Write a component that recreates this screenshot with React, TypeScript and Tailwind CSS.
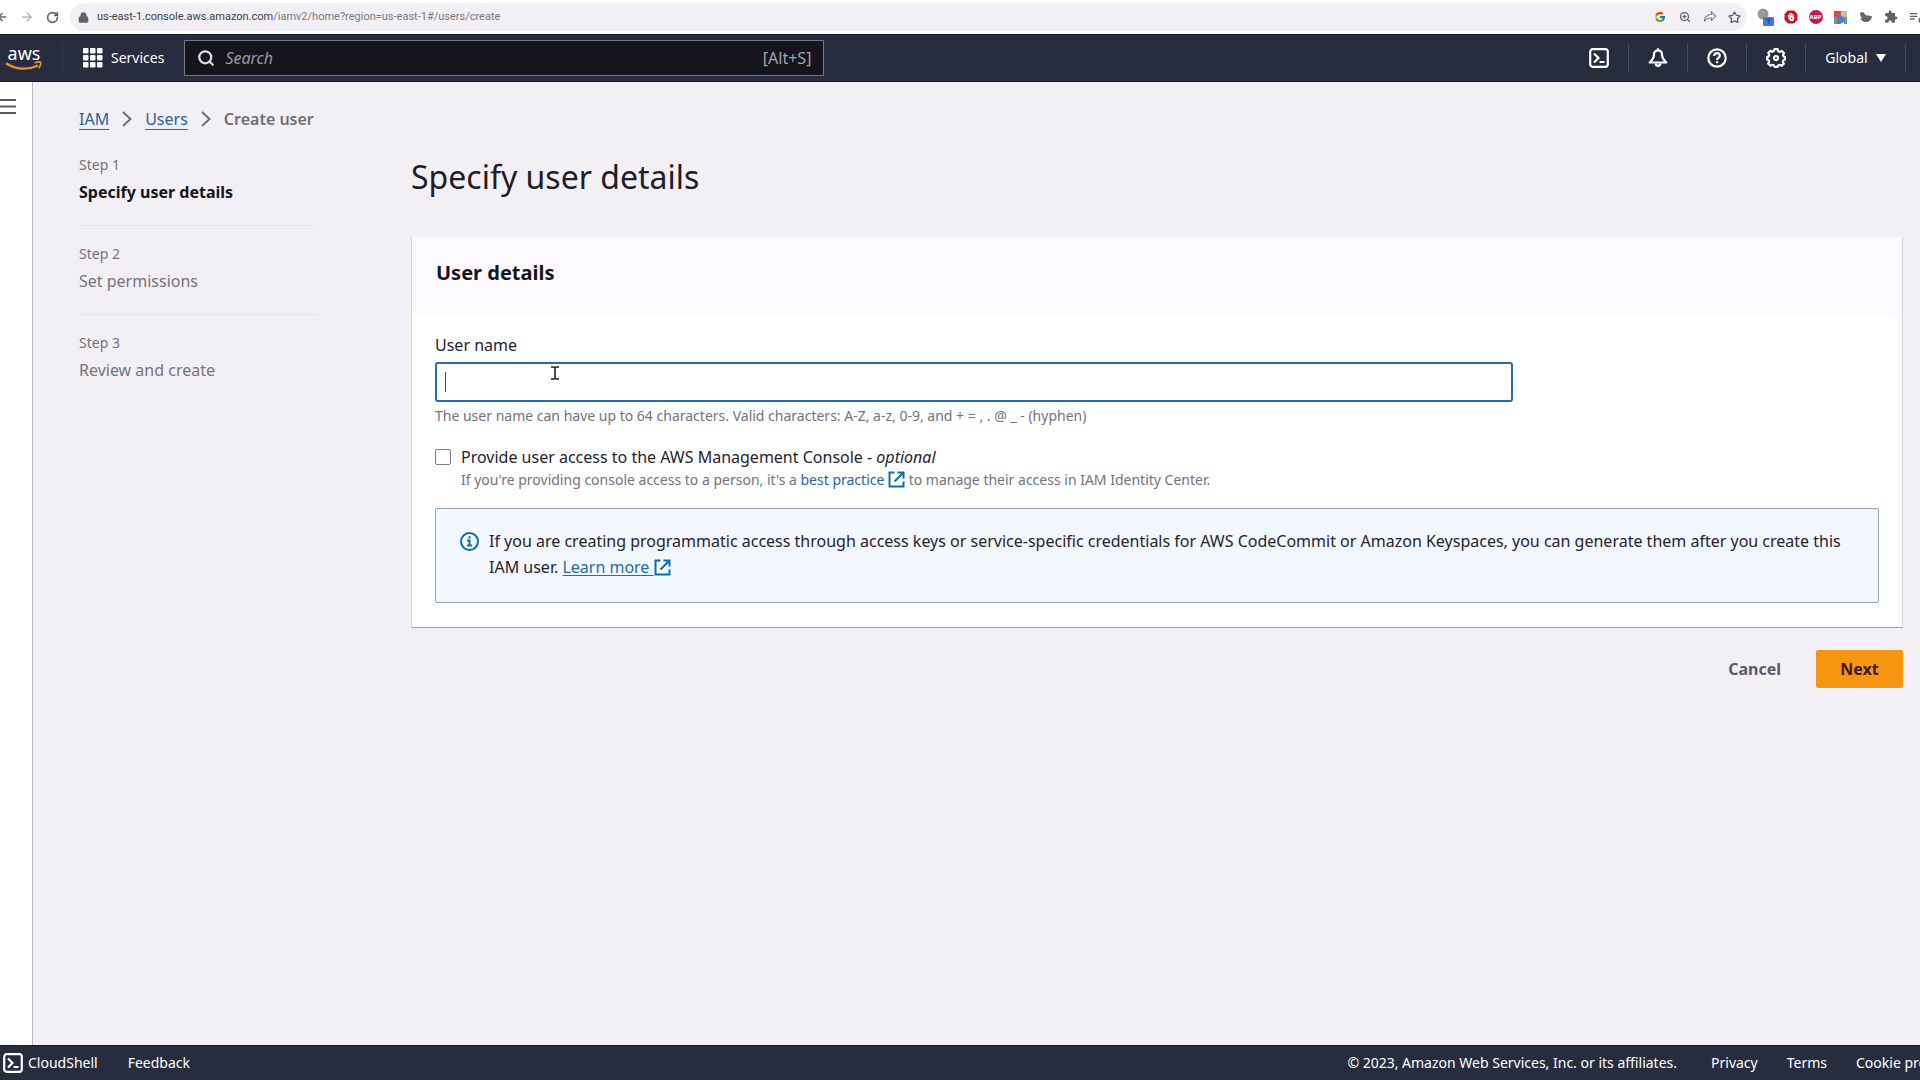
import { ArrowLeft, ArrowRight, RotateCw, Lock, ZoomIn, Star, Search } from "lucide-react";
import { FcGoogle } from "react-icons/fc";
import { MdExtension, MdPlaylistPlay } from "react-icons/md";
import { PiShareFat } from "react-icons/pi";

const steps = [
  { label: "Step 1", title: "Specify user details", active: true },
  { label: "Step 2", title: "Set permissions", active: false },
  { label: "Step 3", title: "Review and create", active: false },
];

const footerLinks = ["Privacy", "Terms"];

const ShellIcon = () => (
  <svg className="h-5 w-5 shrink-0" viewBox="0 0 20 20" fill="none" stroke="currentColor" strokeWidth="2.2">
    <rect x="1.2" y="1.2" width="17.6" height="17.6" rx="2.5" />
    <path d="M5 5.5 9.5 10 5 14.5M10.5 14h5" />
  </svg>
);

const BellIcon = () => (
  <svg className="h-5 w-5" viewBox="0 0 20 20" fill="none" stroke="currentColor" strokeWidth="2.2" strokeLinejoin="round">
    <path d="M10 2.5c-2.6 0-4 1.5-4 4 0 3.5-1.300 5.200-4.300 8h16.600c-3-2.800-4.300-4.500-4.300-8 0-2.500-1.400-4-4-4Z" />
    <path d="M7.500 15.500a2.600 3.200 0 0 0 5 0M10 .2V2" />
  </svg>
);

const HelpIcon = () => (
  <svg className="h-5 w-5" viewBox="0 0 20 20" fill="none" stroke="currentColor" strokeWidth="2.2">
    <circle cx="10" cy="10" r="8.700" />
    <path d="M7.200 8c0-1.800 1.200-2.800 2.800-2.800s2.800 1 2.800 2.500c0 2-2.700 1.900-2.700 4.300" />
    <path d="M10.100 13.200v2" />
  </svg>
);

const GearIcon = () => (
  <svg className="h-5 w-5" viewBox="0 0 20 20" fill="none" stroke="currentColor" strokeWidth="2.2" strokeLinejoin="round">
    <path d="M8.300 1.200h3.400l.6 2 1.700.7 1.900-1 2.100 2.300-1 1.800.5 1.500 1.600.6v2.500l-1.700.7-.6 1.600 1 1.900-2.200 2.100-1.800-1-1.700.6-.7 1.400H8.500l-.6-1.500-1.700-.6-1.900 1-2.100-2.200 1-1.900-.6-1.500-1.500-.6V9l1.600-.6.6-1.600-1-1.800 2.100-2.200 1.800 1 1.600-.7Z" />
    <circle cx="10" cy="10" r="2" />
  </svg>
);

const ExternalIcon = () => (
  <svg className="inline h-[17px] w-[17px] align-[-3px]" viewBox="0 0 17 17" fill="none" stroke="#0972a8" strokeWidth="2">
    <path d="M6.500 1.500h-5v14h14v-5M9.500 1.500h6v6M15 2 6.500 10.500" />
  </svg>
);

const AwsLogo = () => (
  <div className="flex w-10 flex-col items-center text-white">
    <span className="h-4 text-lg leading-4">aws</span>
    <svg className="h-[10px] w-[38px]" viewBox="0 0 38 10" fill="none" stroke="#ec9230">
      <path d="M1 2.200C11 8.800 23 9.200 33 4.500" strokeWidth="2.400" />
      <path d="M29.500 2c3-1.200 5.500-1.200 6-.6s0 3-1.700 6" strokeWidth="1.700" />
    </svg>
  </div>
);

const BrowserBar = () => (
  <div className="flex h-[34px] items-center bg-white text-[#5f6368]">
    <div className="flex w-[70px] shrink-0 items-center gap-3">
      <button aria-label="Back" className="flex w-2 justify-end overflow-hidden"><ArrowLeft className="h-3 w-3 shrink-0" strokeWidth={3} /></button>
      <button aria-label="Forward"><ArrowRight className="h-[14px] w-[14px] text-[#b5b5ba]" strokeWidth={2.5} /></button>
      <button aria-label="Reload"><RotateCw className="h-[13px] w-[13px]" strokeWidth={3} /></button>
    </div>
    <div className="flex h-7 flex-1 items-center rounded-full bg-[#f2f0f5] pl-2">
      <Lock className="h-[11px] w-[11px] fill-[#5f6368]" strokeWidth={3} />
      <span className="ml-2 flex-1 font-['Roboto',sans-serif] text-[11px] text-[#77777d]">
        <span className="text-[#3c4043]">us-east-1.console.aws.amazon.com</span>/iamv2/home?region=us-east-1#/users/create
      </span>
      <div className="grid grid-cols-[repeat(4,25px)] items-center justify-items-center">
        <FcGoogle className="h-3 w-3" />
        <ZoomIn className="h-3 w-3" strokeWidth={2.5} />
        <PiShareFat className="h-[14px] w-[14px]" />
        <Star className="h-[13px] w-[13px]" strokeWidth={2.5} />
      </div>
    </div>
    <div className="grid w-[173px] shrink-0 grid-cols-[repeat(7,25px)] items-center justify-items-center overflow-hidden pl-[6px]">
      <svg className="h-[18px] w-[18px]" viewBox="0 0 18 18">
        <circle cx="6" cy="6" r="5.500" fill="#99999c" />
        <rect x="6" y="9" width="11" height="9" rx="1" fill="#3d7be0" />
        <path d="M9 11.500h5M11.500 11.500v4" stroke="#234e9b" strokeWidth="1.500" />
      </svg>
      <svg className="h-[14px] w-[14px]" viewBox="0 0 14 14">
        <path d="M4 .5h6L13.500 4v6L10 13.500H4L.5 10V4Z" fill="#c3162f" />
        <path d="M4.500 7V5M6 7V3M7.500 7V3M9 8V4M4.500 7.500 6.500 10.500h2.200L10 7M6 7h3v3H7Z" stroke="#fff" strokeWidth="1.200" fill="none" />
      </svg>
      <span className="flex h-[14px] w-[14px] items-center justify-center rounded-full bg-[#cf174f] text-[6px] font-bold text-white">ABP</span>
      <svg className="h-[13px] w-[13px]" viewBox="0 0 13 13">
        <path fill="#d84b4c" d="M0 0h7v13H0z" />
        <path fill="#c7c48e" d="M7 0h6v6H7z" />
        <path fill="#709b78" d="M0 6h3v7H0zM10 6h3v7h-3z" />
        <circle cx="7" cy="8.500" r="3.500" fill="#427de0" />
      </svg>
      <svg className="h-3 w-3" viewBox="0 0 12 12">
        <path fill="#67676b" d="M0 2.500C1 1 3 .5 4 2c1 1.400 1.500 2.500 3 2.500 1.800 0 2.500.5 5 .5-.5 4-2.500 6-6 6-3 0-5-1.500-5.500-4l2 .2C1 6 0 4.500 0 2.500Z" />
      </svg>
      <MdExtension className="h-[14px] w-[14px]" />
      <MdPlaylistPlay className="h-4 w-4" />
    </div>
  </div>
);

const TopNav = () => (
  <header className="flex h-12 items-center border-y border-[#171c28] bg-[#272d3e] text-white">
    <a href="#home" aria-label="AWS home" className="ml-1"><AwsLogo /></a>
    <span className="ml-[18px] h-7 w-px bg-[#343a4a]" />
    <button className="ml-5 flex items-center gap-2 text-sm">
      <svg className="h-5 w-5" viewBox="0 0 20 20" fill="currentColor">
        {[0, 7, 14].map((y) => [0, 7, 14].map((x) => <rect key={`${x}-${y}`} x={x} y={y} width="5.500" height="5.500" rx="1" />))}
      </svg>
      Services
    </button>
    <label className="ml-5 flex h-9 w-1/3 items-center border border-[#737786] bg-[#16151f] px-3">
      <Search className="h-[18px] w-[18px] shrink-0 text-[#dddde4]" strokeWidth={3} />
      <input aria-label="Search" placeholder="Search" className="ml-[10px] min-w-0 flex-1 bg-transparent text-base italic outline-none placeholder:text-[#9b9ba4]" />
      <span className="text-base text-[#a5a5ae]">[Alt+S]</span>
    </label>
    <div className="ml-auto flex h-7 items-center divide-x divide-[#474c5c]">
      <button aria-label="CloudShell" className="flex h-full w-[59px] items-center justify-center"><ShellIcon /></button>
      <button aria-label="Notifications" className="flex h-full w-[59px] items-center justify-center"><BellIcon /></button>
      <button aria-label="Help" className="flex h-full w-[59px] items-center justify-center"><HelpIcon /></button>
      <button aria-label="Settings" className="flex h-full w-[59px] items-center justify-center"><GearIcon /></button>
      <button className="flex h-full w-[100px] items-center justify-center gap-2 text-sm">
        Global
        <svg className="h-2 w-[10px]" viewBox="0 0 10 8" fill="currentColor"><path d="M0 0h10L5 8Z" /></svg>
      </button>
      <span className="h-full w-[14px]" />
    </div>
  </header>
);

const Crumb = () => (
  <svg className="h-4 w-[10px]" viewBox="0 0 10 16" fill="none" stroke="#6f6d76" strokeWidth="2">
    <path d="m1 1 7.500 7L1 15" />
  </svg>
);

const Steps = () => (
  <ol className="w-[238px] shrink-0">
    {steps.map((step) => (
      <li key={step.label} className="mb-4 border-b border-[#e8e6ec] pb-[21px] last:border-0">
        <div className="text-sm leading-6 text-[#75737c]">{step.label}</div>
        <div className={`mt-[3px] text-base leading-6 ${step.active ? "font-bold text-[#16151c]" : "text-[#75737c]"}`}>{step.title}</div>
      </li>
    ))}
  </ol>
);

const UserDetails = () => (
  <section className="border border-t-0 border-[#d5d3da] border-b-[#9f9da6] bg-white">
    <h2 className="bg-[#fcf9ff] px-6 pt-[21px] pb-[27px] text-xl leading-[30px] font-bold text-[#16151c]">User details</h2>
    <div className="px-[23px] pt-[18px] pb-6">
      <label htmlFor="user-name" className="block text-base leading-6">User name</label>
      <div className="mt-[5px] grid grid-cols-4 gap-5">
        <div className="relative col-span-3">
          <input id="user-name" className="block h-10 w-full rounded-[3px] border-2 border-[#286ba9] bg-white px-2 text-base caret-transparent outline-none" />
          <span className="absolute top-[10px] left-[10px] h-5 w-px bg-[#4c4a55]" />
          <svg className="absolute top-1 left-[115px] h-[14px] w-[10px]" viewBox="0 0 10 14" fill="none" stroke="#222" strokeWidth="1.600">
            <path d="M1 1h3l1 1 1-1h3M5 2v10M1 13h3l1-1 1 1h3" />
          </svg>
        </div>
      </div>
      <p className="mt-1 text-sm leading-5 text-[#75737c]">
        The user name can have up to 64 characters. Valid characters: A-Z, a-z, 0-9, and + = , . @ _ - (hyphen)
      </p>
      <div className="mt-[19px] flex gap-[10px]">
        <input id="console-access" type="checkbox" className="mt-1 h-4 w-4 shrink-0 appearance-none rounded-[2px] border border-[#7c7a84] bg-white" />
        <div>
          <label htmlFor="console-access" className="block text-base leading-6">
            Provide user access to the AWS Management Console - <em>optional</em>
          </label>
          <p className="text-sm leading-[22px] text-[#75737c]">
            If you're providing console access to a person, it's a{" "}
            <a href="#best-practice" className="text-[#2a64a5]">best practice <ExternalIcon /></a> to manage their access in IAM Identity Center.
          </p>
        </div>
      </div>
      <div className="mt-[17px] flex gap-[10px] rounded-[2px] border border-[#92a5bd] bg-[#f3f7ff] px-6 pt-[19px] pb-[22px]">
        <svg className="mt-1 h-[19px] w-[19px] shrink-0" viewBox="0 0 19 19" fill="none" stroke="#0972a8" strokeWidth="2">
          <circle cx="9.500" cy="9.500" r="8.500" />
          <path d="M9.500 4.200v2.300M7 8.500h2.500v5M7 13.500h5" />
        </svg>
        <p className="text-base leading-[26px]">
          If you are creating programmatic access through access keys or service-specific credentials for AWS CodeCommit or Amazon Keyspaces, you can generate them after you create this IAM user.{" "}
          <a href="#learn-more" className="text-[#22719f] underline underline-offset-2">Learn more <ExternalIcon /></a>
        </p>
      </div>
    </div>
  </section>
);

const Footer = () => (
  <footer className="flex h-[35px] items-center border-t border-[#171c28] bg-[#272d3e] text-sm whitespace-nowrap text-white">
    <button className="ml-[3px] flex items-center gap-[5px]"><ShellIcon />CloudShell</button>
    <button className="ml-[30px]">Feedback</button>
    <span className="ml-auto">© 2023, Amazon Web Services, Inc. or its affiliates.</span>
    <nav className="ml-[34px] flex gap-[29px]">
      {footerLinks.map((link) => (
        <a key={link} href={`#${link.toLowerCase()}`}>{link}</a>
      ))}
      <a href="#cookies" className="w-16 overflow-hidden">Cookie preferences</a>
    </nav>
  </footer>
);

const App = () => {
  return (
    <div className="flex min-h-screen flex-col bg-[#f2f0f5] font-['Noto_Sans','Open_Sans',sans-serif] text-[#26242d]">
      <BrowserBar />
      <TopNav />
      <div className="flex flex-1">
        <aside className="w-[33px] shrink-0 border-r border-[#bdbbc3] bg-white pt-[17px]">
          <button aria-label="Open navigation" className="block">
            <svg className="h-[15px] w-4" viewBox="0 0 16 15" stroke="#5c5a64" strokeWidth="2"><path d="M0 1h16M0 7.500h16M0 14h16" /></svg>
          </button>
        </aside>
        <main className="min-w-0 flex-1 pr-[17px] pl-[46px]">
          <nav aria-label="Breadcrumb" className="flex items-center gap-[13px] pt-[25px] text-base leading-6 text-[#2a64a5]">
            <a href="#iam" className="underline underline-offset-4">IAM</a>
            <Crumb />
            <a href="#users" className="underline underline-offset-4">Users</a>
            <Crumb />
            <span className="font-semibold text-[#6f6d76]">Create user</span>
          </nav>
          <div className="mt-[22px] flex">
            <Steps />
            <div className="ml-[94px] min-w-0 flex-1">
              <h1 className="mt-1 text-[32px] leading-[40px] text-[#1f1d26]">Specify user details</h1>
              <div className="mt-10"><UserDetails /></div>
              <div className="mt-[22px] flex justify-end gap-[35px] text-base font-bold">
                <button className="text-[#5c5a64]">Cancel</button>
                <button className="h-[38px] w-[87px] rounded-[2px] bg-[#f6950f] text-[#3a1d0d]">Next</button>
              </div>
            </div>
          </div>
        </main>
      </div>
      <Footer />
    </div>
  );
};

export default App;
